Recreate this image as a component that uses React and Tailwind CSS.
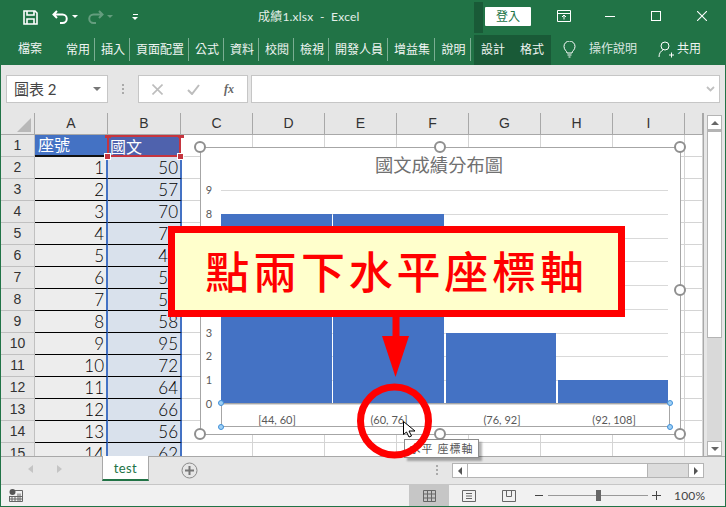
import { Fragment } from 'react'

const CJK = "font-['Lato','Noto_Sans_CJK_TC',sans-serif]"
const COLS = ['A', 'B', 'C', 'D', 'E', 'F', 'G', 'H', 'I', '']
const SCORES = [50, 57, 70, 75, 48, 55, 53, 58, 95, 72, 64, 66, 56, 62]
const TABS = [
  ['常用', 'w-[35px]'], ['插入', 'w-[35px]'], ['頁面配置', 'w-[59px]'], ['公式', 'w-[35px]'],
  ['資料', 'w-[35px]'], ['校閱', 'w-[35px]'], ['檢視', 'w-[35px]'], ['開發人員', 'w-[59px]'],
  ['增益集', 'w-[47px]'], ['說明', 'w-[36px]'],
]

function TitleBar() {
  return (
    <div className="h-[33px] bg-[#217346] flex items-center text-white relative">
      <svg className="ml-[23px] mt-[2px]" width="15" height="15" viewBox="0 0 15 15">
        <path d="M1 1h11l2 2v11H1z" fill="none" stroke="#fff" strokeWidth="1.6" />
        <path d="M4 1v4h7V1M4 14V9h7v5" fill="none" stroke="#fff" strokeWidth="1.6" />
      </svg>
      <svg className="ml-[14px] mt-[1px]" width="17" height="15" viewBox="0 0 17 15">
        <path d="M5 1 1.5 4.5 5 8M2 4.5h8.500a4.200 4.200 0 0 1 0 8.500H8" fill="none" stroke="#fff" strokeWidth="2" />
      </svg>
      <span className="ml-[3px] w-0 h-0 border-x-[3px] border-x-transparent border-t-[3px] border-t-white" />
      <svg className="ml-[9px] mt-[1px] opacity-30" width="17" height="15" viewBox="0 0 17 15">
        <path d="M12 1l3.500 3.500L12 8M15 4.500H6.500a4.200 4.200 0 0 0 0 8.500H9" fill="none" stroke="#fff" strokeWidth="2" />
      </svg>
      <span className="ml-[3px] w-0 h-0 border-x-[3px] border-x-transparent border-t-[3px] border-t-white opacity-30" />
      <span className="ml-[19px] flex flex-col items-center gap-[2px]">
        <span className="w-[5px] h-px bg-white" />
        <span className="w-0 h-0 border-x-[3px] border-x-transparent border-t-[3px] border-t-white" />
      </span>
      <span className={`ml-[120px] text-[12px] tracking-[0.2px] text-[#e4efe9] whitespace-pre ${CJK}`}>成績1.xlsx  -  Excel</span>
      <span className="absolute left-[474px] top-[2px] w-[9px] h-[31px] bg-[#195a37]" />
      <span className={`absolute left-[485px] top-[7px] w-[46px] h-[19px] bg-white rounded-[1px] text-[#217346] text-[12px] flex items-center justify-center ${CJK}`}>登入</span>
      <svg className="absolute left-[557px] top-[10px]" width="14" height="12" viewBox="0 0 14 12">
        <path d="M.5.500h13v11H.500zM.5 3.500h13M7 9.500V5M5 7l2-2 2 2" fill="none" stroke="#fff" />
      </svg>
      <span className="absolute left-[605px] top-[16px] w-[10px] h-px bg-white" />
      <span className="absolute left-[651px] top-[11px] w-[10px] h-[10px] border border-white" />
      <svg className="absolute left-[697px] top-[11px]" width="10" height="10" viewBox="0 0 10 10">
        <path d="M0 0l10 10M10 0L0 10" stroke="#fff" strokeWidth="1.100" />
      </svg>
    </div>
  )
}

function TabRow() {
  return (
    <div className={`h-[32px] bg-[#217346] flex items-center text-[12px] text-[#f0f5f2] relative ${CJK}`}>
      <span className="ml-[18px] w-[42px]">檔案</span>
      {TABS.map(([label, width]) => (
        <span key={label} className={`${width} h-[23px] pt-[3px] pl-[2px] flex justify-center border-r border-[#7aae92] shrink-0 leading-[17px]`}>{label}</span>
      ))}
      <div className="ml-[3px] w-[77px] h-[30px] mt-[2px] bg-[#195a37] flex items-center justify-between px-[7px] shrink-0">
        <span>設計</span>
        <span>格式</span>
      </div>
      <svg className="ml-[12px]" width="13" height="17" viewBox="0 0 13 17">
        <path d="M4 12c0-2-3-3-3-6.500a5.500 5.500 0 0 1 11 0C12 9 9 10 9 12zM4.500 14h4M5.500 16h2" fill="none" stroke="#fff" />
      </svg>
      <span className="ml-[13px] text-[#dbe8e1]">操作說明</span>
      <svg className="ml-[21px]" width="17" height="17" viewBox="0 0 17 17">
        <circle cx="7" cy="5" r="4" fill="none" stroke="#fff" />
        <path d="M1 16c0-4 2-6 4-7M11 14h5M13.500 11.500v5" fill="none" stroke="#fff" />
      </svg>
      <span className="ml-[2px]">共用</span>
    </div>
  )
}

function FormulaBar() {
  return (
    <div className="h-[48px] bg-[#e6e6e6] flex items-start pt-[10px] pl-[5px] pr-[5px] shrink-0">
      <div className={`w-[102px] h-[28px] bg-white border border-[#c6c6c6] flex items-center justify-between pl-[7px] pr-[6px] text-[15px] text-[#444] ${CJK}`}>
        <span>圖表 2</span>
        <span className="w-0 h-0 border-x-[4px] border-x-transparent border-t-[4px] border-t-[#777]" />
      </div>
      <div className="w-[30px] h-[28px] flex flex-col items-center justify-center gap-[2px]">
        <span className="w-[2px] h-[2px] bg-[#aaa]" />
        <span className="w-[2px] h-[2px] bg-[#aaa]" />
        <span className="w-[2px] h-[2px] bg-[#aaa]" />
      </div>
      <div className="w-[110px] h-[28px] bg-white border border-[#c6c6c6] flex items-center">
        <svg className="ml-[13px]" width="11" height="11" viewBox="0 0 11 11"><path d="M.5.500l10 10M10.500.500l-10 10" stroke="#bdbdbd" strokeWidth="1.600" /></svg>
        <svg className="ml-[24px]" width="13" height="11" viewBox="0 0 13 11"><path d="M1 6l4 4 7-9" fill="none" stroke="#bdbdbd" strokeWidth="2" /></svg>
        <span className="ml-[24px] font-['Liberation_Serif',serif] italic font-bold text-[12px] text-[#666]">fx</span>
      </div>
      <div className="ml-[3px] w-[469px] h-[28px] bg-white border border-[#c6c6c6] flex items-center justify-end pr-[4px]">
        <svg width="9" height="6" viewBox="0 0 9 6"><path d="M1 1l3.500 3.500L8 1" fill="none" stroke="#c0c0c0" strokeWidth="1.800" /></svg>
      </div>
    </div>
  )
}

function Cell({ row, col }) {
  const numText = `text-right pr-[2px] text-[17px] leading-[21px] text-black font-['Lato',sans-serif] font-light`
  if (col === 'A' || col === 'B') {
    const isA = col === 'A'
    if (row === 1) {
      return (
        <div className={`${isA ? 'bg-[#4472c4] border-b-2 border-b-[#111] pl-[3px]' : 'bg-[#4f62ad] border-2 border-[#c5353f] -ml-px pl-[1px]'} text-white text-[16px] leading-[20px] h-[22px] ${CJK}`}>
          {isA ? '座號' : '國文'}
        </div>
      )
    }
    return (
      <div className={`h-[22px] border-b border-black ${isA ? 'bg-[#ededed] border-r-2 border-r-[#4472c4]' : 'bg-[#d9e1ec] border-r-2 border-r-[#4472c4] -mr-px relative z-10'} ${numText}`}>
        {isA ? row - 1 : SCORES[row - 2]}
      </div>
    )
  }
  return <div className="h-[22px] bg-white border-r border-b border-[#d4d4d4]" />
}

function SheetGrid() {
  const rows = Array.from({ length: 15 }, (_, i) => i + 1)
  return (
    <div className="flex-1 overflow-hidden bg-white">
      <div className="grid grid-cols-[34px_73px_73px_72px_72px_72px_72px_72px_72px_72px_18px]">
        <div className="h-[22px] bg-[#e6e6e6] border-r border-b border-[#a8a8a8] relative overflow-hidden">
          <span className="absolute right-[3px] bottom-[2px] w-0 h-0 border-l-[14px] border-l-transparent border-b-[14px] border-b-[#b8b8b8]" />
        </div>
        {COLS.map((col) => (
          <div key={col || 'J'} className="h-[22px] bg-[#e6e6e6] border-r border-b border-[#a8a8a8] text-center text-[14px] leading-[20px] text-[#333] font-['Liberation_Sans',sans-serif]">{col}</div>
        ))}
        {rows.map((row) => (
          <Fragment key={row}>
            <div className="h-[22px] bg-[#e6e6e6] border-r border-b border-[#c0c0c0] text-center text-[14px] leading-[21px] text-[#333] font-['Liberation_Sans',sans-serif]">{row}</div>
            {COLS.map((col) => <Cell key={col || 'J'} row={row} col={col} />)}
          </Fragment>
        ))}
      </div>
    </div>
  )
}

function VScroll() {
  return (
    <div className="w-[22px] bg-[#e6e6e6] border-l border-[#a8a8a8] flex flex-col items-center pt-[2px] shrink-0">
      <div className="w-[15px] h-[15px] bg-white border border-[#b4b4b4] flex items-center justify-center shrink-0">
        <span className="w-0 h-0 border-x-[4px] border-x-transparent border-b-[4px] border-b-[#666]" />
      </div>
      <div className="w-[15px] h-[208px] bg-white border border-[#b4b4b4] border-t-2 shrink-0" />
      <div className="w-[15px] flex-1 bg-[#d9d9d9]" />
      <div className="w-[15px] h-[15px] bg-white border border-[#b4b4b4] flex items-center justify-center shrink-0">
        <span className="w-0 h-0 border-x-[4px] border-x-transparent border-t-[4px] border-t-[#666]" />
      </div>
    </div>
  )
}

function SheetTabs() {
  return (
    <div className="h-[28px] bg-[#e6e6e6] border-t border-[#a8a8a8] flex items-start relative shrink-0">
      <span className="ml-[27px] mt-[8px] w-0 h-0 border-y-[4px] border-y-transparent border-r-[5px] border-r-[#c4c4c4]" />
      <span className="ml-[24px] mt-[8px] w-0 h-0 border-y-[4px] border-y-transparent border-l-[5px] border-l-[#c4c4c4]" />
      <div className="ml-[40px] w-[47px] h-[25px] -mt-px bg-white border-x border-[#a8a8a8] border-b-2 border-b-[#217346] text-center text-[13px] leading-[24px] tracking-[0.4px] text-[#217346] font-['Lato',sans-serif]">test</div>
      <svg className="ml-[32px] mt-[5px]" width="17" height="17" viewBox="0 0 17 17">
        <circle cx="8.500" cy="8.500" r="7.500" fill="none" stroke="#8a8a8a" />
        <path d="M8.500 4v9M4 8.500h9" stroke="#777" strokeWidth="2" />
      </svg>
      <div className="ml-[238px] mt-[8px] flex flex-col gap-[2px]">
        <span className="w-[2px] h-[2px] bg-[#aaa]" />
        <span className="w-[2px] h-[2px] bg-[#aaa]" />
        <span className="w-[2px] h-[2px] bg-[#aaa]" />
      </div>
      <div className="ml-[14px] mt-[6px] w-[252px] h-[15px] bg-[#dcdcdc] border border-[#b4b4b4] flex">
        <div className="w-[15px] bg-white border-r border-[#b4b4b4] flex items-center justify-center">
          <span className="w-0 h-0 border-y-[4px] border-y-transparent border-r-[4px] border-r-[#555]" />
        </div>
        <div className="w-[180px] bg-white border-r border-[#b4b4b4]" />
        <div className="flex-1" />
        <div className="w-[15px] bg-white border-l border-[#b4b4b4] flex items-center justify-center">
          <span className="w-0 h-0 border-y-[4px] border-y-transparent border-l-[4px] border-l-[#555]" />
        </div>
      </div>
    </div>
  )
}

function StatusBar() {
  return (
    <div className="h-[22px] bg-[#f1f1f1] border-t border-[#c6c6c6] flex items-center shrink-0">
      <svg className="ml-[8px]" width="14" height="13" viewBox="0 0 14 13">
        <circle cx="3.500" cy="3" r="3" fill="#555" />
        <path d="M6 1.500h7.500v11H.5V7M3 7.500v5M6 7.500v5M9 4.500v8M11 4.500v8M.5 7.500h13M.5 10h13" fill="none" stroke="#666" />
      </svg>
      <div className="ml-[386px] w-[40px] h-full bg-[#c6c6c6] flex items-center justify-center">
        <svg width="13" height="12" viewBox="0 0 13 12"><path d="M.5.500h12v11H.500zM4.500.500v11M8.500.500v11M.5 4h12M.5 8h12" fill="none" stroke="#666" /></svg>
      </div>
      <svg className="ml-[13px]" width="14" height="12" viewBox="0 0 14 12"><path d="M.5.500h13v11H.500zM4 3.500h6M4 6h6M4 8.500h6" fill="none" stroke="#666" /></svg>
      <svg className="ml-[26px]" width="14" height="12" viewBox="0 0 14 12"><path d="M.5.500h13v11H.500zM4.500.500v6h5v-6" fill="none" stroke="#666" /></svg>
      <span className="ml-[19px] w-[8px] h-px bg-[#444]" />
      <div className="ml-[5px] w-[100px] h-px bg-[#999] relative">
        <span className="absolute left-[48px] -top-[5px] w-[5px] h-[11px] bg-[#666]" />
      </div>
      <svg className="ml-[4px]" width="9" height="9" viewBox="0 0 9 9"><path d="M0 4.500h9M4.500 0v9" stroke="#444" /></svg>
      <span className="ml-[13px] text-[12px] tracking-[0.2px] text-[#444] font-['Lato',sans-serif]">100%</span>
    </div>
  )
}

function Handle({ x, y }) {
  return <circle cx={x} cy={y} r="5" fill="#fff" stroke="#8f8f8f" strokeWidth="2" />
}

function BlueDot({ x, y }) {
  return <circle cx={x} cy={y} r="2.500" fill="#9fd0f5" stroke="#3f8fd8" />
}

// 圖表座標以整張截圖為準，疊在工作表上方
function ChartOverlay() {
  const labels = ['9', '8', '7', '6', '5', '4', '3', '2', '1', '0']
  const bars = [
    [221, 214, 111], [333, 214, 111], [446, 333, 110], [558, 380, 110],
  ]
  return (
    <svg className="absolute left-0 top-0" width="726" height="507" viewBox="0 0 726 507">
      <rect x="200.500" y="147.500" width="480" height="287" fill="#fff" stroke="#a6a6a6" />
      <text x="439" y="172" textAnchor="middle" fontSize="18.300" fill="#707070" fontFamily="'Noto Sans CJK TC', sans-serif">國文成績分布圖</text>
      {labels.map((l, i) => {
        const y = 190 + i * 23.75
        return (
          <Fragment key={l}>
            <line x1="221" x2="668" y1={Math.round(y) + 0.5} y2={Math.round(y) + 0.5} stroke="#d9d9d9" />
            <text x="209" y={y + 4} textAnchor="middle" fontSize="11" fill="#595959" fontFamily="Lato, sans-serif">{l}</text>
          </Fragment>
        )
      })}
      {bars.map(([x, y, w]) => <rect key={x} x={x} y={y} width={w} height={403 - y} fill="#4472c4" />)}
      <rect x="221.500" y="403.500" width="448" height="23" fill="none" stroke="#a6a6a6" />
      {[['[44, 60]', 277], ['(60, 76]', 389], ['(76, 92]', 502], ['(92, 108]', 614]].map(([t, x]) => (
        <text key={t} x={x} y="424" textAnchor="middle" fontSize="11" fill="#595959" fontFamily="Lato, sans-serif">{t}</text>
      ))}
      <BlueDot x={221} y={403} /><BlueDot x={221} y={427} /><BlueDot x={670} y={403} /><BlueDot x={670} y={427} />
      <Handle x={200} y={147} /><Handle x={440} y={147} /><Handle x={680} y={147} />
      <Handle x={680} y={290} />
      <Handle x={200} y={434} /><Handle x={440} y={434} /><Handle x={680} y={434} />
    </svg>
  )
}

export default function App() {
  return (
    <div className="relative w-[726px] h-[507px] overflow-hidden bg-[#217346] pb-[1px] px-px flex flex-col">
      <div className="-mx-px"><TitleBar /></div>
      <div className="-mx-px"><TabRow /></div>
      <FormulaBar />
      <div className="flex flex-1 min-h-0 isolate">
        <SheetGrid />
        <VScroll />
      </div>
      <SheetTabs />
      <StatusBar />

      {/* 選取框四角的紅色控點 */}
      <span className="absolute left-[105px] top-[135px] w-[6px] h-[3px] bg-[#c5353f]" />
      <span className="absolute left-[178px] top-[135px] w-[6px] h-[3px] bg-[#c5353f]" />
      <span className="absolute left-[104px] top-[153px] w-[7px] h-[7px] bg-[#c5353f] border border-white" />
      <span className="absolute left-[177px] top-[153px] w-[7px] h-[7px] bg-[#c5353f] border border-white" />

      <ChartOverlay />

      <div className="absolute left-[168px] top-[226px] w-[457px] h-[91px] bg-[#ffffcc] border-[7px] border-[#f00] flex items-center justify-center">
        <span className="-mt-[3px] text-[44px] leading-none tracking-[3.800px] font-medium text-[#f00] font-['Noto_Sans_CJK_TC',sans-serif]">點兩下水平座標軸</span>
      </div>

      <div className={`absolute left-[404px] top-[439px] w-[75px] h-[19px] bg-white border border-[#8c8c8c] shadow-[3px_3px_2px_rgba(0,0,0,0.3)] text-[11px] leading-[17px] tracking-[1px] text-[#555] text-center ${CJK}`}>水平 座標軸</div>

      <svg className="absolute left-0 top-0" width="726" height="507" viewBox="0 0 726 507">
        <rect x="392.500" y="317" width="7" height="20" fill="#f00" />
        <path d="M382 336h27l-13.500 41z" fill="#f00" />
        <circle cx="394.500" cy="421" r="34" fill="none" stroke="#f00" strokeWidth="7" />
      </svg>

      <svg className="absolute left-[403px] top-[421px]" width="14" height="18" viewBox="0 0 14 18">
        <path d="M.5.500v13l3-2.500 2.500 5 2.500-1-2.500-5h6z" fill="#fff" stroke="#000" />
      </svg>
    </div>
  )
}
